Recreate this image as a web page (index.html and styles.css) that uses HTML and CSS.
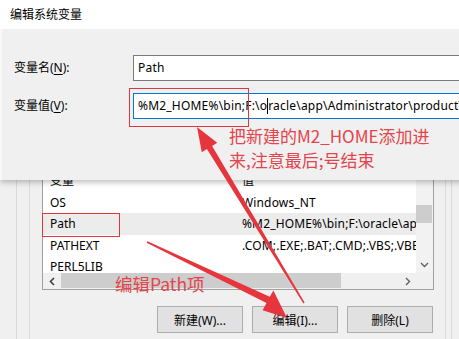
FILE: index.html
```html
<!DOCTYPE html>
<html lang="zh-CN">
<head>
<meta charset="utf-8">
<title>编辑系统变量</title>
<link rel="stylesheet" href="styles.css">
</head>
<body>
<div class="page">
  <div class="back">
    <div class="frame-outer">
      <div class="frame-inner">
        <div class="listbox">
          <div class="list-view">
            <div class="rows">
              <div class="row head"><span class="c1">变量</span><span class="c2">值</span></div>
              <div class="row"><span class="c1">OS</span><span class="c2">Windows_NT</span></div>
              <div class="row sel"><span class="c1">Path</span><span class="c2">%M2_HOME%\bin;F:\oracle\app\Administrator\product\11.2.0\dbhome_1\bin;</span></div>
              <div class="row"><span class="c1">PATHEXT</span><span class="c2">.COM;.EXE;.BAT;.CMD;.VBS;.VBE;.JS;.JSE;.WSF;.WSH;.MSC</span></div>
              <div class="row"><span class="c1">PERL5LIB</span><span class="c2"></span></div>
            </div>
            <div class="vscroll">
              <div class="vthumb"></div>
              <div class="vdown">
                <svg width="9" height="6" viewBox="0 0 9 6"><polyline points="1,1 4.5,4.5 8,1" fill="none" stroke="#606060" stroke-width="1.4"/></svg>
              </div>
            </div>
          </div>
          <div class="hscroll">
            <div class="harrow">
              <svg width="6" height="9" viewBox="0 0 6 9"><polyline points="5,1 1.5,4.5 5,8" fill="none" stroke="#404040" stroke-width="1.6"/></svg>
            </div>
            <div class="htrack"><div class="hthumb"></div></div>
            <div class="harrow">
              <svg width="6" height="9" viewBox="0 0 6 9"><polyline points="1,1 4.5,4.5 1,8" fill="none" stroke="#606060" stroke-width="1.4"/></svg>
            </div>
            <div class="corner"></div>
          </div>
        </div>
        <div class="buttons">
          <button class="btn">新建(W)...</button>
          <button class="btn">编辑(I)...</button>
          <button class="btn">删除(L)</button>
        </div>
      </div>
    </div>
  </div>

  <div class="dialog">
    <div class="titlebar">编辑系统变量</div>
    <div class="dlg-body">
      <label class="lbl">变量名(<u>N</u>):</label>
      <div class="field">Path</div>
      <label class="lbl">变量值(<u>V</u>):</label>
      <div class="field focus">%M2_HOME%\bin;F:\o<span class="caret"></span>racle\app\Administrator\product\11.2.0\dbhome_1\bin;</div>
    </div>
  </div>

  <div class="mark mark-value"></div>
  <div class="mark mark-path"></div>
  <div class="note note-top">把新建的M2_HOME添加进<br>来,注意最后;号结束</div>
  <div class="note note-bottom">编辑Path项</div>

  <svg class="arrows" width="459" height="339" viewBox="0 0 459 339">
    <polygon points="304.6,302.6 212.1,145.9 217.2,142.8 197,127 201.8,152.2 206.9,149.1 303.4,303.4" fill="#e7353d"/>
    <polygon points="146.6,242.8 266.5,303.0 262.6,310.2 287,318 273.4,290.5 269.8,296.8 147.4,241.2" fill="#e7353d"/>
  </svg>
</div>
</body>
</html>
```

FILE: styles.css
```css
* { box-sizing: border-box; }

html, body {
  margin: 0;
  padding: 0;
}

body {
  font-family: "Noto Sans", "Noto Sans CJK SC", sans-serif;
  font-size: 12px;
  color: #000;
  background: #f0f0f0;
}

.page {
  position: relative;
  width: 459px;
  height: 339px;
  overflow: hidden;
  background: #f0f0f0;
}

/* ---------- background window ---------- */
.back {
  padding-top: 148px;
}

.frame-outer {
  margin-left: 16px;
  width: 436px;
  border-left: 1px solid #dadada;
  border-right: 1px solid #dadada;
  padding-right: 5px;
  height: 191px;
}

.frame-inner {
  border-left: 1px solid #dadada;
  border-right: 1px solid #dadada;
  margin-left: 12px;
  padding-left: 12px;
  padding-right: 11px;
  height: 191px;
}

.listbox {
  width: 392px;
  border: 1px solid #a0a0a0;
  background: #fff;
}

.list-view {
  display: flex;
  height: 124px;
}

.rows {
  flex: 1;
  min-width: 0;
  overflow: hidden;
  padding-top: 21px;
}

.row {
  display: flex;
  height: 21.5px;
  line-height: 21.5px;
  white-space: nowrap;
}

.row.sel {
  background: #ececec;
}

.c1 {
  width: 199px;
  flex: none;
  padding-left: 7px;
}

.c2 {
  flex: none;
  letter-spacing: 0.15px;
}

.vscroll {
  width: 17px;
  flex: none;
  background: #f2f2f2;
  display: flex;
  flex-direction: column;
  padding-top: 56px;
}

.vthumb {
  width: 16px;
  height: 18px;
  background: #cdcdcd;
}

.vdown {
  margin-top: auto;
  height: 17px;
  display: flex;
  align-items: center;
  justify-content: center;
}

.hscroll {
  display: flex;
  height: 16px;
  background: #f0f0f0;
}

.harrow {
  width: 17px;
  flex: none;
  display: flex;
  align-items: center;
  justify-content: center;
}

.htrack {
  flex: 1;
  padding: 0 0 1px 1px;
}

.hthumb {
  width: 280px;
  height: 15px;
  background: #cdcdcd;
}

.corner {
  width: 17px;
  flex: none;
  background: #f0f0f0;
}

.buttons {
  display: flex;
  justify-content: flex-end;
  gap: 9px;
  margin-top: 16px;
  padding-right: 1px;
}

.btn {
  width: 86px;
  height: 27px;
  border: 1px solid #adadad;
  background: #e1e1e1;
  font-family: "Noto Sans", "Noto Sans CJK SC", sans-serif;
  font-size: 12px;
  color: #000;
  padding: 0;
}

.lbl u {
  text-decoration: underline;
  text-underline-offset: 2px;
}

/* ---------- front dialog ---------- */
.dialog {
  position: absolute;
  left: 0;
  top: 0;
  width: 470px;
  height: 180px;
  background: #f0f0f0;
  box-shadow: 0 2px 6px rgba(0, 0, 0, 0.28);
}

.titlebar {
  height: 29px;
  background: #fff;
  padding-left: 10px;
  line-height: 30px;
  font-size: 12px;
}

.dlg-body {
  border-left: 2px solid #f8f8f8;
  height: 151px;
  padding: 26px 0 0 12px;
  display: grid;
  grid-template-columns: 119px 1fr;
  grid-template-rows: 26px 26px;
  row-gap: 12px;
}

.lbl {
  line-height: 26px;
  font-size: 12px;
}

.field {
  height: 26px;
  border: 1px solid #7a7a7a;
  background: #fff;
  padding-left: 4px;
  line-height: 24px;
  white-space: nowrap;
  overflow: hidden;
  letter-spacing: 0.2px;
}

.field.focus {
  border-color: #0078d7;
}

.caret {
  display: inline-block;
  width: 1px;
  height: 16px;
  background: #000;
  vertical-align: -4px;
}

/* ---------- annotations ---------- */
.mark {
  position: absolute;
  border: 1px solid #e0373f;
}

.mark-value {
  left: 129px;
  top: 88px;
  width: 120px;
  height: 39px;
}

.mark-path {
  left: 42px;
  top: 213px;
  width: 78px;
  height: 24px;
}

.note {
  position: absolute;
  font-family: "Noto Sans CJK SC", sans-serif;
  font-size: 17px;
  line-height: 24px;
  color: #e4444c;
  white-space: nowrap;
}

.note-top {
  left: 229px;
  top: 124px;
}

.note-bottom {
  left: 115px;
  top: 272px;
  font-size: 17.5px;
}

.arrows {
  position: absolute;
  left: 0;
  top: 0;
  pointer-events: none;
}
```
